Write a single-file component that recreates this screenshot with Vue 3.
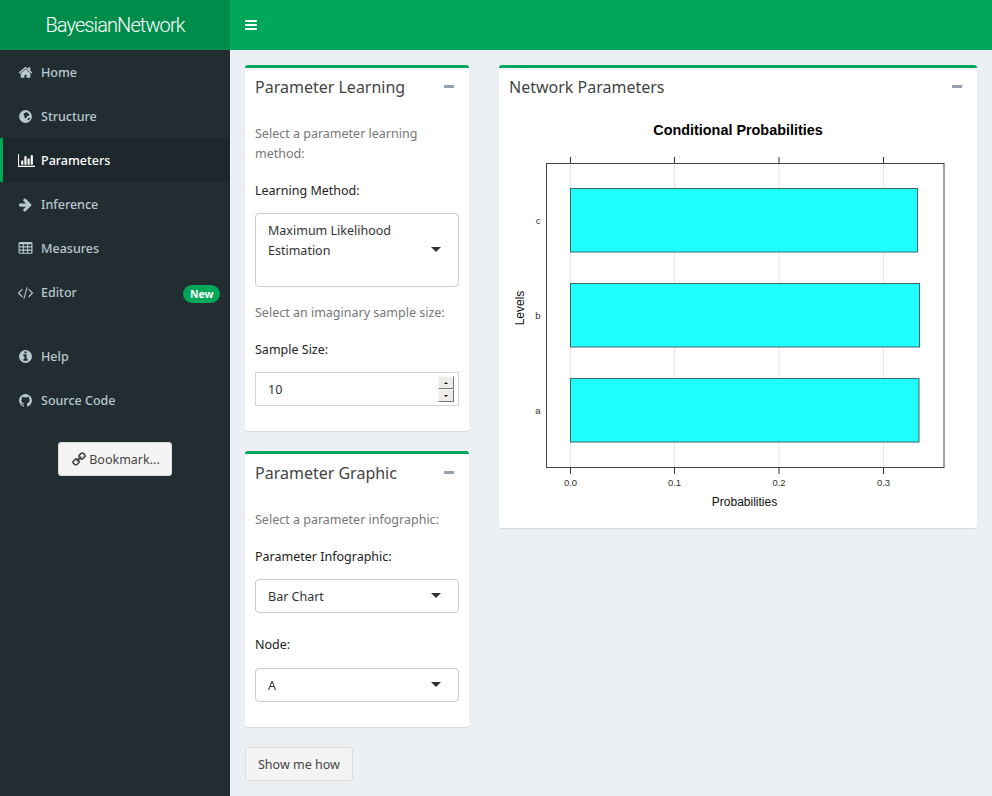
<script setup>
const globe = 'M896 128a768 768 0 1 0 0 1536a768 768 0 1 0 0-1536zM720 520l260-130 240 90 120 190-80 170-150-30-60 180-170 150-130-170 30-170-120-130zM1180 1120l190-60 90 60-170 190-130 20z'

const menu = [
  { label: 'Home', box: '0 0 1792 1792', d: 'M1472 992v480q0 26-19 45t-45 19h-384v-384h-256v384h-384q-26 0-45-19t-19-45v-480q0-1 .5-3t.5-3l575-474 575 474q1 2 1 6zm223-69l-62 74q-8 9-21 11h-3q-13 0-21-7l-692-577-692 577q-12 8-24 7-13-2-21-11l-62-74q-8-10-7-23.5t11-21.5l719-599q32-26 76-26t76 26l244 204v-195q0-14 9-23t23-9h192q14 0 23 9t9 23v408l219 182q10 8 11 21.5t-7 23.5z' },
  { label: 'Structure', box: '0 0 1792 1792', d: globe, evenodd: true },
  { label: 'Parameters', box: '0 0 2048 1792', d: 'M640 896v512h-256v-512h256zm384-512v1024h-256v-1024h256zm1024 1152v128h-2048v-1536h128v1408h1920zm-640-896v768h-256v-768h256zm384-384v1152h-256v-1152h256z', active: true },
  { label: 'Inference', box: '0 0 1792 1792', d: 'M1600 960q0 54-37 91l-651 651q-39 37-91 37-51 0-90-37l-75-75q-38-38-38-91t38-91l293-293h-704q-52 0-84.5-37.5t-32.5-90.5v-128q0-53 32.5-90.5t84.5-37.5h704l-293-294q-38-36-38-90t38-90l75-75q38-38 90-38 53 0 91 38l651 651q37 35 37 90z' },
  { label: 'Measures', box: '0 0 1792 1792', d: 'M576 1376v-192q0-14-9-23t-23-9h-320q-14 0-23 9t-9 23v192q0 14 9 23t23 9h320q14 0 23-9t9-23zm0-384v-192q0-14-9-23t-23-9h-320q-14 0-23 9t-9 23v192q0 14 9 23t23 9h320q14 0 23-9t9-23zm512 384v-192q0-14-9-23t-23-9h-320q-14 0-23 9t-9 23v192q0 14 9 23t23 9h320q14 0 23-9t9-23zm-512-768v-192q0-14-9-23t-23-9h-320q-14 0-23 9t-9 23v192q0 14 9 23t23 9h320q14 0 23-9t9-23zm512 384v-192q0-14-9-23t-23-9h-320q-14 0-23 9t-9 23v192q0 14 9 23t23 9h320q14 0 23-9t9-23zm512 384v-192q0-14-9-23t-23-9h-320q-14 0-23 9t-9 23v192q0 14 9 23t23 9h320q14 0 23-9t9-23zm-512-768v-192q0-14-9-23t-23-9h-320q-14 0-23 9t-9 23v192q0 14 9 23t23 9h320q14 0 23-9t9-23zm512 384v-192q0-14-9-23t-23-9h-320q-14 0-23 9t-9 23v192q0 14 9 23t23 9h320q14 0 23-9t9-23zm0-384v-192q0-14-9-23t-23-9h-320q-14 0-23 9t-9 23v192q0 14 9 23t23 9h320q14 0 23-9t9-23zm128-320v1088q0 66-47 113t-113 47h-1344q-66 0-113-47t-47-113v-1088q0-66 47-113t113-47h1344q66 0 113 47t47 113z' },
  { label: 'Editor', box: '0 0 1792 1792', d: 'M553 1399l-50 50q-10 10-23 10t-23-10l-466-466q-10-10-10-23t10-23l466-466q10-10 23-10t23 10l50 50q10 10 10 23t-10 23l-393 393 393 393q10 10 10 23t-10 23zm591-1067l-373 1291q-4 13-15.5 19.5t-23.5 2.5l-62-17q-13-4-19.5-15.5t-2.5-24.5l373-1291q4-13 15.5-19.5t23.5-2.5l62 17q13 4 19.5 15.5t2.5 24.5zm657 651l-466 466q-10 10-23 10t-23-10l-50-50q-10-10-10-23t10-23l393-393-393-393q-10-10-10-23t10-23l50-50q10-10 23-10t23 10l466 466q10 10 10 23t-10 23z', badge: 'New' },
  { label: 'Help', box: '0 0 1792 1792', d: 'M1152 1376v-160q0-14-9-23t-23-9h-96v-512q0-14-9-23t-23-9h-320q-14 0-23 9t-9 23v160q0 14 9 23t23 9h96v320h-96q-14 0-23 9t-9 23v160q0 14 9 23t23 9h448q14 0 23-9t9-23zm-128-896v-160q0-14-9-23t-23-9h-192q-14 0-23 9t-9 23v160q0 14 9 23t23 9h192q14 0 23-9t9-23zm640 416q0 209-103 385.5t-279.5 279.5-385.5 103-385.5-103-279.500-279.500-103-385.500 103-385.500 279.500-279.500 385.500-103 385.500 103 279.500 279.500 103 385.500z', spaced: true },
  { label: 'Source Code', box: '0 0 1792 1792', d: 'M896 128q209 0 385.500 103t279.500 279.500 103 385.500q0 251-146.500 451.500t-378.500 277.500q-27 5-40-7t-13-30q0-3 .5-76.500t.5-134.500q0-97-52-142 57-6 102.500-18t94-39 81-66.500 53-105 20.500-150.500q0-119-79-206 37-91-8-204-28-9-81 11t-92 44l-38 24q-93-26-192-26t-192 26q-16-11-42.500-27t-83.500-38.500-85-13.500q-45 113-8 204-79 87-79 206 0 85 20.500 150t52.500 105 80.500 67 94 39 102.500 18q-39 36-49 103-21 10-45 15t-57 5-65.500-21.500-55.500-62.500q-19-32-48.500-52t-49.500-24l-20-3q-21 0-29 4.500t-5 11.500 9 14 13 12l7 5q22 10 43.500 38t31.500 51l10 23q13 38 44 63t67 32 69.500 7 55.500-3.500l23-4q0 38 .5 88.500t.5 54.500q0 18-13 30t-40 7q-232-77-378.500-277.500t-146.500-451.500q0-209 103-385.500t279.500-279.500 385.500-103z' }
]

const barsIcon = 'M1664 1344v128q0 26-19 45t-45 19h-1408q-26 0-45-19t-19-45v-128q0-26 19-45t45-19h1408q26 0 45 19t19 45zm0-512v128q0 26-19 45t-45 19h-1408q-26 0-45-19t-19-45v-128q0-26 19-45t45-19h1408q26 0 45 19t19 45zm0-512v128q0 26-19 45t-45 19h-1408q-26 0-45-19t-19-45v-128q0-26 19-45t45-19h1408q26 0 45 19t19 45z'
const linkIcon = 'M1456 1216q0-40-28-68l-208-208q-28-28-68-28-42 0-72 32 3 3 19 18.500t21.500 21.500 15 19 13 25.500 3.500 27.500q0 40-28 68t-68 28q-15 0-27.500-3.500t-25.500-13-19-15-21.500-21.500-18.500-19q-33 31-33 73 0 40 28 68l206 207q27 27 68 27 40 0 68-26l147-146q28-28 28-67zm-703-705q0-40-28-68l-206-207q-28-28-68-28-39 0-68 27l-147 146q-28 28-28 67 0 40 28 68l208 208q27 27 68 27 42 0 72-31-3-3-19-18.500t-21.500-21.500-15-19-13-25.500-3.500-27.500q0-40 28-68t68-28q15 0 27.500 3.500t25.500 13 19 15 21.500 21.500 18.500 19q33-31 33-73zm895 705q0 120-85 203l-147 146q-83 83-203 83-121 0-204-85l-206-207q-83-83-83-203 0-123 88-209l-88-88q-86 88-208 88-120 0-204-84l-208-208q-84-84-84-204t85-203l147-146q83-83 203-83 121 0 204 85l206 207q83 83 83 203 0 123-88 209l88 88q86-88 208-88 120 0 204 84l208 208q84 84 84 204z'

// plot coordinates are relative to the svg, 478 wide, starting under the box header
const ticks = [
  { x: 71.5, label: '0.0' },
  { x: 175.5, label: '0.1' },
  { x: 280, label: '0.2' },
  { x: 384.5, label: '0.3' }
]
const bars = [
  { y: 80.5, width: 347, label: 'c' },
  { y: 175.5, width: 349, label: 'b' },
  { y: 270.5, width: 348.5, label: 'a' }
]
</script>

<template>
  <div class="page">
    <header class="topbar">
      <div class="logo">BayesianNetwork</div>
      <svg class="toggle" viewBox="0 0 1792 1792"><path :d="barsIcon" fill="#fff" /></svg>
    </header>
    <div class="main">
      <aside class="sidebar">
        <template v-for="item in menu" :key="item.label">
          <div class="item" :class="{ active: item.active, spaced: item.spaced }">
            <svg class="icon" :viewBox="item.box" :class="{ wide: item.active }">
              <path :d="item.d" :fill-rule="item.evenodd ? 'evenodd' : 'nonzero'" fill="currentColor" />
            </svg>
            <span class="item-label">{{ item.label }}</span>
            <span v-if="item.badge" class="badge">{{ item.badge }}</span>
          </div>
        </template>
        <div class="bookmark-wrap">
          <div class="btn bookmark">
            <svg class="btn-icon" viewBox="0 0 1792 1792"><path :d="linkIcon" fill="currentColor" /></svg>
            Bookmark...
          </div>
        </div>
      </aside>

      <main class="content">
        <div class="col-left">
          <section class="box">
            <div class="box-head">
              <h3>Parameter Learning</h3>
              <span class="minus"></span>
            </div>
            <div class="box-body learn">
              <p class="hint">Select a parameter learning method:</p>
              <div class="label">Learning Method:</div>
              <div class="select tall">
                <span class="select-text">Maximum Likelihood Estimation</span>
                <span class="caret"></span>
              </div>
              <p class="hint">Select an imaginary sample size:</p>
              <div class="label">Sample Size:</div>
              <div class="number">
                <span>10</span>
                <div class="spin">
                  <div class="spin-btn"><i class="up"></i></div>
                  <div class="spin-btn"><i class="down"></i></div>
                </div>
              </div>
            </div>
          </section>

          <section class="box">
            <div class="box-head">
              <h3>Parameter Graphic</h3>
              <span class="minus"></span>
            </div>
            <div class="box-body graphic">
              <p class="hint">Select a parameter infographic:</p>
              <div class="label">Parameter Infographic:</div>
              <div class="select">
                <span class="select-text">Bar Chart</span>
                <span class="caret"></span>
              </div>
              <div class="label node">Node:</div>
              <div class="select">
                <span class="select-text">A</span>
                <span class="caret"></span>
              </div>
            </div>
          </section>

          <div class="btn show">Show me how</div>
        </div>

        <div class="col-right">
          <section class="box plot-box">
            <div class="box-head">
              <h3>Network Parameters</h3>
              <span class="minus"></span>
            </div>
            <svg class="plot" width="478" height="420" viewBox="0 0 478 420">
              <text x="239" y="27" text-anchor="middle" class="plot-title">Conditional Probabilities</text>
              <line v-for="t in ticks" :key="'g' + t.x" :x1="t.x" :x2="t.x" y1="55" y2="359" stroke="#e6e6e6" />
              <rect x="47.5" y="55.500" width="397.500" height="304" fill="none" stroke="#444" />
              <g v-for="b in bars" :key="b.label">
                <rect x="71.500" :y="b.y" :width="b.width" height="63.500" fill="#1fffff" stroke="#3f6668" />
                <text x="41.500" :y="b.y + 35" text-anchor="end" class="tick">{{ b.label }}</text>
              </g>
              <g v-for="t in ticks" :key="t.label">
                <line :x1="t.x" :x2="t.x" y1="49" y2="55" stroke="#333" />
                <line :x1="t.x" :x2="t.x" y1="360" y2="366" stroke="#333" />
                <text :x="t.x" y="378" text-anchor="middle" class="tick">{{ t.label }}</text>
              </g>
              <text x="245.500" y="398" text-anchor="middle" class="axis">Probabilities</text>
              <text transform="translate(25 200) rotate(-90)" text-anchor="middle" class="axis">Levels</text>
            </svg>
          </section>
        </div>
      </main>
    </div>
  </div>
</template>

<style>
html, body {
  margin: 0;
  background: #ecf0f5;
}
</style>

<style scoped>
.page {
  width: 992px;
  height: 796px;
  overflow: hidden;
  display: flex;
  flex-direction: column;
  font-family: "Noto Sans", "Liberation Sans", sans-serif;
  font-size: 12.5px;
  color: #333;
  background: #ecf0f5;
}

.topbar {
  display: flex;
  align-items: center;
  height: 50px;
  flex: none;
  background: #00a65a;
}

.logo {
  width: 230px;
  line-height: 50px;
  text-align: center;
  color: #fff;
  background: #008d4c;
  font-family: Roboto, "Liberation Sans", sans-serif;
  font-weight: 300;
  font-size: 20px;
  letter-spacing: -0.9px;
}

.toggle {
  width: 14px;
  height: 14px;
  margin-left: 14px;
}

.main {
  display: flex;
  flex: 1;
  min-height: 0;
}

.sidebar {
  width: 230px;
  flex: none;
  background: #222d32;
  color: #b8c7ce;
}

.item {
  display: flex;
  align-items: center;
  height: 44px;
  padding-left: 18px;
  font-weight: 500;
  box-sizing: border-box;
}

.item.active {
  background: #1e282c;
  border-left: 3px solid #00a65a;
  padding-left: 15px;
  color: #fff;
}

.item.spaced {
  margin-top: 20px;
}

.icon {
  width: 15px;
  height: 15px;
  margin-right: 8px;
  flex: none;
  overflow: visible;
}

.icon.wide {
  width: 17px;
  margin-right: 6px;
}

.badge {
  margin-left: auto;
  margin-right: 10px;
  margin-top: 4px;
  padding: 0 6.5px;
  height: 18px;
  line-height: 18px;
  border-radius: 9px;
  background: #00a65a;
  color: #fff;
  font-size: 10.5px;
  font-weight: 700;
}

.bookmark-wrap {
  display: flex;
  justify-content: center;
  padding-top: 20px;
}

.btn {
  display: flex;
  align-items: center;
  height: 34px;
  box-sizing: border-box;
  border: 1px solid #ddd;
  border-radius: 3px;
  background: #f4f4f4;
  color: #444;
}

.bookmark {
  padding: 0 11px 0 12px;
  gap: 3px;
}

.btn-icon {
  width: 15px;
  height: 15px;
  transform: scaleX(-1);
}

.content {
  flex: 1;
  display: flex;
  gap: 30px;
  padding: 15px 15px 0;
  min-width: 0;
}

.col-left {
  width: 224px;
  flex: none;
}

.col-right {
  flex: 1;
  min-width: 0;
}

.box {
  background: #fff;
  border-top: 3px solid #00a65a;
  border-radius: 3px;
  box-shadow: 0 1px 1px rgba(0, 0, 0, 0.1);
  margin-bottom: 20px;
}

.box-head {
  display: flex;
  align-items: center;
  justify-content: space-between;
  height: 37px;
  padding: 0 15px 0 10px;
}

h3 {
  margin: 0;
  font-size: 16px;
  font-weight: 400;
  color: #444;
}

.minus {
  width: 10px;
  height: 3px;
  background: #97a0b3;
}

.box-body {
  padding: 19px 10px 25px;
}

.hint {
  margin: 0 0 17px;
  line-height: 20px;
  color: #777;
}

.label {
  line-height: 20px;
  margin-bottom: 12px;
  color: #222;
}

.select {
  display: flex;
  align-items: center;
  justify-content: space-between;
  box-sizing: border-box;
  height: 34px;
  padding: 0 17px 0 12px;
  border: 1px solid #ccc;
  border-radius: 4px;
  background: #fff;
  color: #333;
}

.select-text {
  line-height: 20px;
  max-width: 150px;
  margin-top: 2px;
}

.select .caret {
  margin-bottom: 2px;
}

.select.tall {
  height: 74px;
  align-items: flex-start;
  padding-top: 7px;
  margin-bottom: 16px;
}

.select.tall .select-text {
  margin-top: 0;
}

.select.tall .caret {
  margin-top: 26px;
  margin-bottom: 0;
}

.caret {
  width: 0;
  height: 0;
  border-left: 5.5px solid transparent;
  border-right: 5.5px solid transparent;
  border-top: 5px solid #333;
  flex: none;
}

.number {
  display: flex;
  align-items: center;
  justify-content: space-between;
  box-sizing: border-box;
  height: 34px;
  padding: 0 4px 0 12px;
  border: 1px solid #d2d6de;
}

.spin {
  display: flex;
  flex-direction: column;
}

.spin-btn {
  width: 16px;
  height: 13px;
  box-sizing: border-box;
  display: flex;
  align-items: center;
  justify-content: center;
  background: #eeece8;
  border-right: 1px solid #777;
  border-bottom: 1px solid #777;
  border-top: 1px solid #fafafa;
  border-left: 1px solid #fafafa;
}

.spin-btn i {
  width: 0;
  height: 0;
  border-left: 2px solid transparent;
  border-right: 2px solid transparent;
}

.spin-btn .up {
  border-bottom: 2px solid #111;
}

.spin-btn .down {
  border-top: 2px solid #111;
}

.node {
  margin-top: 22px;
  margin-bottom: 13px;
}

.show {
  display: inline-flex;
  padding: 0 12px;
}

.plot {
  display: block;
  margin-top: 3px;
}

.plot-title {
  font-family: "Liberation Sans", Arial, sans-serif;
  font-size: 14.4px;
  font-weight: 700;
  fill: #000;
}

.tick {
  font-family: "Liberation Sans", Arial, sans-serif;
  font-size: 9.5px;
  fill: #333;
}

.axis {
  font-family: "Liberation Sans", Arial, sans-serif;
  font-size: 12px;
  fill: #111;
}
</style>
